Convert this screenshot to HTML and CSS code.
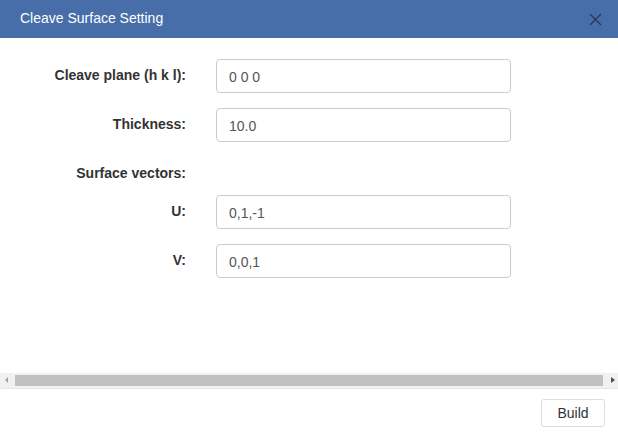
FILE: index.html
```html
<!DOCTYPE html>
<html>
<head>
<meta charset="utf-8">
<link rel="stylesheet" href="styles.css">
</head>
<body>
<div class="dialog">
  <div class="header">
    <span class="title">Cleave Surface Setting</span>
    <svg class="close" width="13" height="13" viewBox="0 0 13 13"><path d="M1 1L12 12M12 1L1 12" stroke="#2b3a52" stroke-width="1.4" fill="none"/></svg>
  </div>
  <div class="content">
    <div class="row">
      <label class="lbl">Cleave plane (h k l):</label>
      <div class="input">0 0 0</div>
    </div>
    <div class="row">
      <label class="lbl">Thickness:</label>
      <div class="input">10.0</div>
    </div>
    <div class="row section">
      <label class="lbl">Surface vectors:</label>
    </div>
    <div class="row">
      <label class="lbl">U:</label>
      <div class="input">0,1,-1</div>
    </div>
    <div class="row">
      <label class="lbl">V:</label>
      <div class="input">0,0,1</div>
    </div>
  </div>
  <div class="scrollbar">
    <span class="arrow left"></span>
    <div class="thumb"></div>
    <span class="arrow right"></span>
  </div>
  <div class="footer">
    <button class="btn">Build</button>
  </div>
</div>
</body>
</html>
```
FILE: styles.css
```css
html, body {
  margin: 0;
  padding: 0;
  background: #fff;
}
.dialog {
  width: 618px;
  height: 432px;
  display: flex;
  flex-direction: column;
  font-family: "Liberation Sans", Arial, sans-serif;
  font-size: 14px;
  color: #333;
}
.header {
  height: 38px;
  background: #476ea9;
  display: flex;
  align-items: center;
  justify-content: space-between;
  padding: 0 16px 0 20px;
  box-sizing: border-box;
}
.title {
  color: #fff;
  font-size: 14px;
  margin-top: -3px;
}
.close {
  display: block;
}
.content {
  flex: 1;
  padding-top: 21px;
  display: flex;
  flex-direction: column;
  gap: 15px;
}
.row {
  display: grid;
  grid-template-columns: 186px 295px;
  column-gap: 30px;
}
.row.section {
  margin-bottom: -3px;
}
.lbl {
  text-align: right;
  font-weight: bold;
  padding-top: 6px;
  line-height: 20px;
}
.input {
  height: 34px;
  box-sizing: border-box;
  border: 1px solid #ccc;
  border-radius: 4px;
  padding: 7px 12px;
  line-height: 20px;
  color: #555;
}
.scrollbar {
  height: 15px;
  background: #f1f1f1;
  display: flex;
  align-items: center;
  border-bottom: 1px solid #e6e6e6;
}
.thumb {
  flex: 1;
  height: 11px;
  background: #c1c1c1;
}
.arrow {
  width: 15px;
  height: 15px;
  position: relative;
}
.arrow::after {
  content: "";
  position: absolute;
  top: 4px;
  border-top: 3.5px solid transparent;
  border-bottom: 3.5px solid transparent;
}
.arrow.left::after {
  left: 5px;
  border-right: 3px solid #a3a3a3;
}
.arrow.right::after {
  left: 8px;
  border-left: 4px solid #505050;
}
.footer {
  height: 43px;
  display: flex;
  justify-content: flex-end;
  align-items: flex-start;
  padding: 10px 13px 0 0;
  box-sizing: border-box;
}
.btn {
  font-family: "Liberation Sans", Arial, sans-serif;
  font-size: 14px;
  color: #333;
  background: #fff;
  border: 1px solid #ddd;
  border-radius: 3px;
  width: 64px;
  height: 28px;
  padding: 0;
}
```
